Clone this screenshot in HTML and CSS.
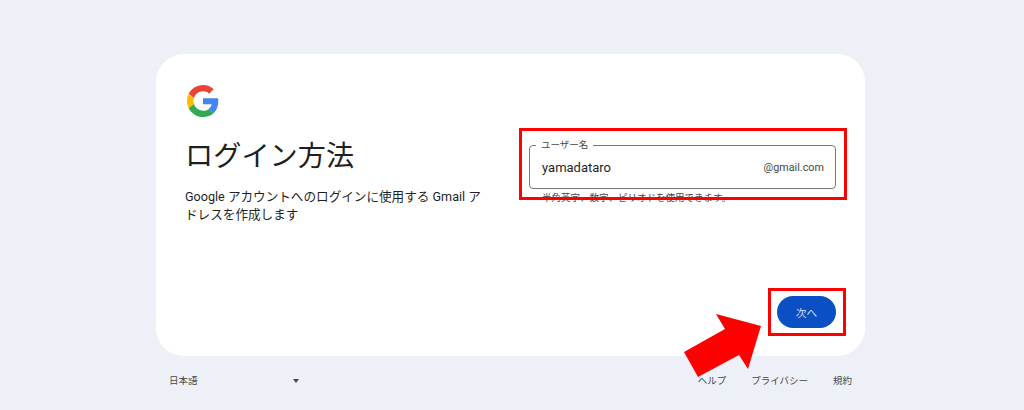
FILE: index.html
```html
<!DOCTYPE html>
<html lang="ja">
<head>
  <title>ログイン方法</title>
  <link rel="stylesheet" href="styles.css">
</head>
<body>
  <div class="page">
    <div class="card">
      <div class="card-top">
        <div class="intro">
          <svg class="logo" viewBox="0 0 48 48">
            <path fill="#EA4335" d="M24 9.5c3.54 0 6.71 1.22 9.21 3.6l6.85-6.85C35.9 2.38 30.47 0 24 0 14.62 0 6.51 5.38 2.56 13.22l7.98 6.19C12.43 13.72 17.74 9.5 24 9.5z"/>
            <path fill="#4285F4" d="M46.98 24.55c0-1.57-.15-3.09-.38-4.55H24v9.02h12.94c-.58 2.96-2.26 5.48-4.78 7.18l7.73 6c4.51-4.18 7.09-10.36 7.09-17.65z"/>
            <path fill="#FBBC05" d="M10.53 28.59c-.48-1.45-.76-2.99-.76-4.59s.27-3.14.76-4.59l-7.98-6.19C.92 16.46 0 20.12 0 24c0 3.88.92 7.54 2.56 10.78l7.97-6.19z"/>
            <path fill="#34A853" d="M24 48c6.48 0 11.93-2.13 15.89-5.81l-7.73-6c-2.15 1.45-4.92 2.3-8.16 2.3-6.26 0-11.57-4.22-13.47-9.91l-7.98 6.19C6.51 42.62 14.62 48 24 48z"/>
          </svg>
          <h1>ログイン方法</h1>
          <p>Google アカウントへのログインに使用する Gmail アドレスを作成します</p>
        </div>
        <div class="form">
          <fieldset class="field">
            <legend>ユーザー名</legend>
            <span class="value">yamadataro</span>
            <span class="suffix">@gmail.com</span>
          </fieldset>
          <div class="hint">半角英字、数字、ピリオドを使用できます。</div>
        </div>
      </div>
      <div class="actions">
        <button class="next">次へ</button>
      </div>
    </div>

    <div class="footer">
      <div class="lang">
        <span>日本語</span>
        <span class="caret"></span>
      </div>
      <div class="links">
        <span>ヘルプ</span>
        <span>プライバシー</span>
        <span>規約</span>
      </div>
    </div>

    <!-- red annotations on top of the screenshot -->
    <div class="mark mark-field"></div>
    <div class="mark mark-next"></div>
    <svg class="arrow" viewBox="0 0 78 64">
      <polygon fill="#ff0000" points="32,0 77,12 64,55 55,41 14,63 0,38 41,15"/>
    </svg>
  </div>
</body>
</html>
```

FILE: styles.css
```css
* {
  box-sizing: border-box;
}

html, body {
  margin: 0;
  height: 100%;
}

body {
  background-color: #edf1f7;
  color: #1f1f1f;
  font-family: "Roboto", "Noto Sans CJK JP", sans-serif;
  overflow: hidden;
}

.page {
  position: relative;
  width: 1024px;
  height: 410px;
  padding: 54px 0 0 156px;
}

.card {
  display: flex;
  flex-direction: column;
  justify-content: space-between;
  width: 709px;
  height: 302px;
  padding: 31px 29px 28px 29px;
  background-color: #fff;
  border-radius: 28px;
}

.card-top {
  display: flex;
  justify-content: space-between;
}

.intro {
  width: 300px;
}

.logo {
  display: block;
  width: 32px;
  height: 32px;
  margin-left: 2px;
}

h1 {
  margin: 20px 0 0 0;
  font-size: 28.2px;
  font-weight: 400;
  line-height: 40px;
}

.intro p {
  margin: 11px 0 0 0;
  font-size: 12.6px;
  line-height: 18px;
}

.form {
  width: 307px;
  margin-top: 54px;
}

.field {
  display: flex;
  align-items: center;
  justify-content: space-between;
  height: 50px;
  margin: 0;
  padding: 0 11px 5px 12px;
  border: 1px solid #747775;
  border-radius: 4px;
}

.field legend {
  padding: 0 5px;
  margin-left: -6px;
  font-size: 9.5px;
  line-height: 12px;
  color: #444746;
}

.value {
  font-size: 13px;
}

.suffix {
  font-size: 10.8px;
  color: #444746;
}

.hint {
  margin: 2px 0 0 13px;
  font-size: 9.5px;
  line-height: 14px;
  color: #444746;
}

.actions {
  display: flex;
  justify-content: flex-end;
}

.next {
  width: 59px;
  height: 32px;
  padding: 0;
  border: none;
  border-radius: 16px;
  background-color: #0a50c4;
  color: #d3dff5;
  font-family: inherit;
  font-size: 10.7px;
}

.footer {
  display: flex;
  justify-content: space-between;
  width: 709px;
  margin-top: 18px;
  padding: 0 13px 0 13px;
  font-size: 9.5px;
  line-height: 14px;
  color: #444746;
}

.lang {
  display: flex;
  align-items: center;
  justify-content: space-between;
  width: 130px;
}

.caret {
  width: 0;
  height: 0;
  border-left: 3.5px solid transparent;
  border-right: 3.5px solid transparent;
  border-top: 4px solid #444746;
}

.links {
  display: flex;
  gap: 25px;
}

.mark {
  position: absolute;
  border: 3px solid #ff0000;
}

.mark-field {
  left: 519px;
  top: 128px;
  width: 328px;
  height: 72px;
}

.mark-next {
  left: 768px;
  top: 288px;
  width: 78px;
  height: 48px;
}

.arrow {
  position: absolute;
  left: 684px;
  top: 314px;
  width: 78px;
  height: 64px;
}
```
